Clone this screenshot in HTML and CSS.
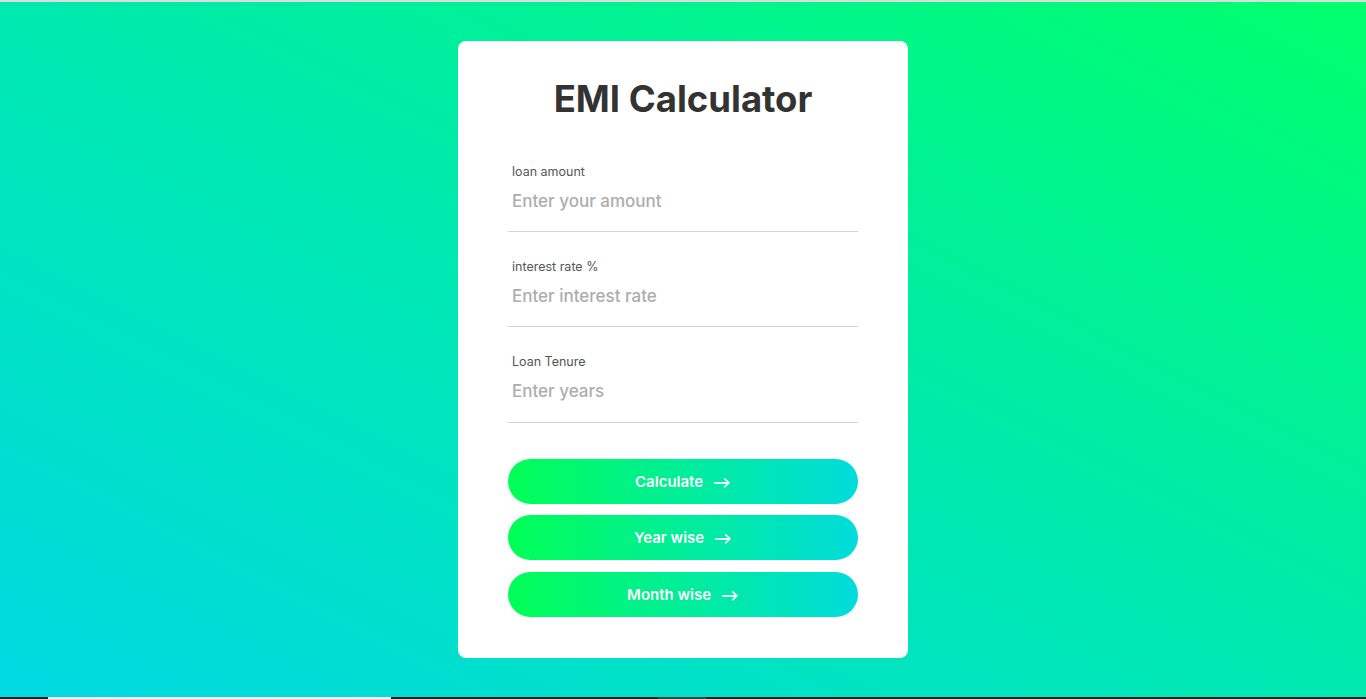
FILE: index.html
```html
<!DOCTYPE html>
<html>
<head>
<meta charset="utf-8">
<link rel="stylesheet" href="styles.css">
</head>
<body>
<div class="topbar"></div>
<div class="stage">
  <div class="card">
    <h1 class="title">EMI Calculator</h1>
    <div class="field">
      <label class="label">loan amount</label>
      <input class="input" type="text" placeholder="Enter your amount">
    </div>
    <div class="field">
      <label class="label">interest rate %</label>
      <input class="input" type="text" placeholder="Enter interest rate">
    </div>
    <div class="field field-last">
      <label class="label">Loan Tenure</label>
      <input class="input" type="text" placeholder="Enter years">
    </div>
    <div class="buttons">
      <button class="btn">Calculate <span class="arrow">&#10230;</span></button>
      <button class="btn">Year wise <span class="arrow">&#10230;</span></button>
      <button class="btn btn-last">Month wise <span class="arrow">&#10230;</span></button>
    </div>
  </div>
</div>
<div class="taskbar">
  <div class="seg seg-dark1"></div>
  <div class="seg seg-white"></div>
  <div class="seg seg-dark2"></div>
  <div class="seg seg-grey"></div>
  <div class="seg seg-dark3"></div>
</div>
</body>
</html>
```
FILE: styles.css
```css
html, body {
  margin: 0;
  padding: 0;
  height: 699px;
  overflow: hidden;
}
body {
  display: flex;
  flex-direction: column;
  font-family: "Inter", "Open Sans", sans-serif;
}
.topbar {
  height: 2px;
  background: #dcdcdc;
  flex: none;
}
.stage {
  flex: 1;
  background: linear-gradient(to top right, #00d9e2 0%, #00e9b0 50%, #00ff6c 100%);
  display: flex;
  justify-content: center;
  align-items: flex-start;
  padding-top: 39px;
  box-sizing: border-box;
}
.card {
  width: 450px;
  height: 617px;
  background: #fff;
  border-radius: 8px;
  box-sizing: border-box;
  padding: 31px 50px 41px;
  display: flex;
  flex-direction: column;
}
.title {
  flex: none;
  margin: 0 0 11px;
  text-align: center;
  font-size: 36.5px;
  line-height: 54px;
  font-weight: 700;
  color: #333333;
  letter-spacing: 0;
}
.field {
  flex: none;
  display: flex;
  flex-direction: column;
  border-bottom: 1px solid #d4d4d4;
  padding: 26px 4px 0;
  height: 95px;
  box-sizing: border-box;
}
.field-last { height: 96px; }
.label {
  font-size: 12.5px;
  line-height: 18px;
  color: #555;
}
.input {
  border: none;
  outline: none;
  padding: 0;
  margin-top: 8px;
  font-family: "Inter", "Open Sans", sans-serif;
  font-size: 17px;
  line-height: 24px;
  height: 24px;
  color: #333;
  background: transparent;
}
.input::placeholder {
  color: #adadad;
  font-weight: 500;
}
.buttons {
  flex: none;
  margin-top: 36px;
  display: flex;
  flex-direction: column;
  gap: 11px;
}
.btn {
  height: 45px;
  border: none;
  border-radius: 23px;
  background: linear-gradient(to right, #00ff55 0%, #00dcdc 100%);
  color: #fff;
  font-family: "Inter", "Open Sans", sans-serif;
  font-size: 15px;
  font-weight: 600;
  display: flex;
  align-items: center;
  justify-content: center;
  gap: 9px;
  cursor: pointer;
}
.btn-last { margin-top: 1px; }
.arrow {
  font-size: 14px;
  font-weight: 700;
}
.taskbar {
  height: 2px;
  flex: none;
  display: flex;
}
.seg { height: 2px; }
.seg-dark1 { width: 48px; background: #0b1f1f; }
.seg-white { width: 343px; background: #f2fbfb; }
.seg-dark2 { width: 267px; background: #0b1f1f; }
.seg-grey { width: 48px; background: #2e4a46; }
.seg-dark3 { flex: 1; background: #0b1f1f; }
```
